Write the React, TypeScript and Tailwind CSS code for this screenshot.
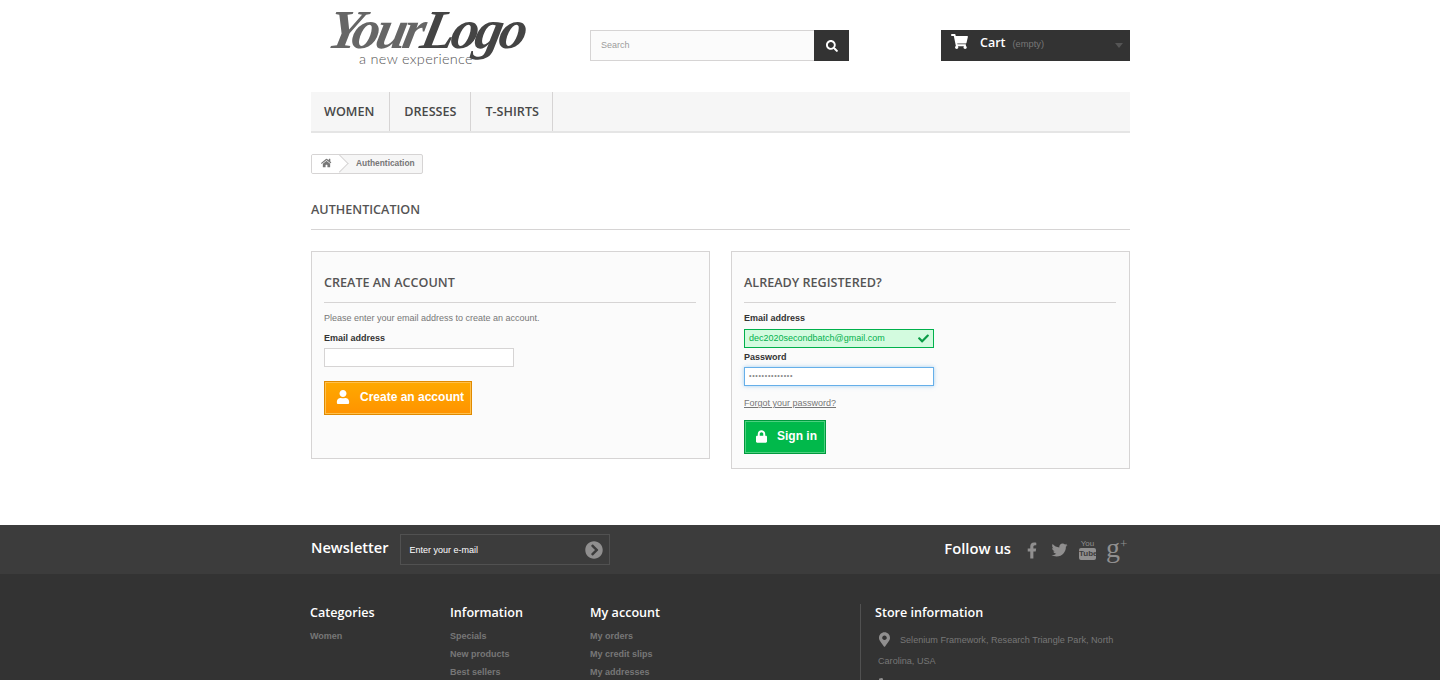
import { FaCheck, FaChevronCircleRight, FaFacebookF, FaHome, FaLock, FaMapMarkerAlt, FaPhone, FaSearch, FaShoppingCart, FaTwitter, FaUser } from "react-icons/fa";

const headingFont = "font-['Open_Sans',sans-serif]";

function Logo() {
  return (
    <div className="ml-[14px] mt-[10px] flex w-[210px] flex-col select-none">
      <span className="h-[40px] origin-bottom-left -skew-x-12 font-['Liberation_Serif',serif] text-[55px] leading-[40px] font-bold italic tracking-[-3.5px] whitespace-nowrap text-[#666]">
        Your<span className="text-[#444]">Logo</span>
      </span>
      <span className="pl-[34px] font-['Lato',sans-serif] text-[14.5px] leading-[18px] font-light tracking-[0.3px] whitespace-nowrap text-[#555]">
        a new experience
      </span>
    </div>
  );
}

function Header() {
  return (
    <div className="flex h-[92px] items-start">
      <div className="w-[279px]">
        <Logo />
      </div>
      <div className="mt-[30px] flex h-[31px] w-[259px]">
        <div className="flex-1 border border-r-0 border-[#d6d4d4] bg-[#fbfbfb] pl-[10px] text-[9px] leading-[29px] text-[#9c9b9b]">Search</div>
        <div className="flex w-[35px] items-center justify-center bg-[#333] text-white">
          <FaSearch className="h-[12px] w-[12px]" />
        </div>
      </div>
      <div className="ml-[92px] mt-[30px] flex h-[31px] w-[189px] items-start bg-[#333] pl-[10px] text-white">
        <FaShoppingCart className="mt-[4px] h-[15px] w-[17px]" />
        <span className={`ml-[12px] mt-[4px] text-[12.5px] leading-[18px] font-semibold ${headingFont}`}>Cart</span>
        <span className="ml-[7px] mt-[9px] text-[9.3px] leading-[11px] text-[#777]">(empty)</span>
        <span className="ml-auto mr-[7px] mt-[13px] h-0 w-0 border-x-[4px] border-t-[5px] border-x-transparent border-t-[#555]" />
      </div>
    </div>
  );
}

function Nav() {
  return (
    <div className={`flex h-[41px] border-b-2 border-[#e5e5e5] bg-[#f6f6f6] text-[12.6px] leading-[39px] font-semibold text-[#484848] ${headingFont}`}>
      <div className="border-r border-[#d6d4d4] pl-[13px] pr-[15px]">WOMEN</div>
      <div className="border-r border-[#d6d4d4] px-[14px]">DRESSES</div>
      <div className="border-r border-[#d6d4d4] pl-[14px] pr-[13px]">T-SHIRTS</div>
    </div>
  );
}

function Breadcrumb() {
  return (
    <div className="mt-[21px] flex h-[20px] w-[112px] items-center overflow-hidden rounded-[2px] border border-[#d6d4d4] bg-[#f6f6f6]">
      <div className="relative flex h-full w-[28px] items-center justify-center bg-white text-[#777]">
        <FaHome className="mb-[2px] ml-[1px] h-[10px] w-[11px]" />
        <span className="absolute right-[-6px] top-[2px] h-[13px] w-[13px] rotate-45 border-r border-t border-[#d6d4d4] bg-white" />
      </div>
      <span className="mb-[2px] ml-[16px] text-[8.4px] font-bold text-[#777]">Authentication</span>
    </div>
  );
}

function PanelTitle({ children }: { children: string }) {
  return (
    <div className={`border-b border-[#d6d4d4] pb-[9px] text-[12.6px] leading-[20px] font-semibold text-[#555454] ${headingFont}`}>
      {children}
    </div>
  );
}

function Label({ children }: { children: string }) {
  return <div className="text-[9px] leading-[11px] font-bold text-[#333]">{children}</div>;
}

function CreateAccount() {
  return (
    <div className="h-[208px] w-[399px] border border-[#d6d4d4] bg-[#fbfbfb] pl-[12px] pr-[13px] pt-[21px]">
      <PanelTitle>CREATE AN ACCOUNT</PanelTitle>
      <p className="mt-[10px] text-[9px] leading-[11px] text-[#777]">Please enter your email address to create an account.</p>
      <div className="mt-[9px]">
        <Label>Email address</Label>
      </div>
      <div className="mt-[4px] h-[19px] w-[190px] border border-[#d6d4d4] bg-white" />
      <div className="mt-[14px] flex h-[34px] w-[148px] items-center border border-[#e08a00] bg-gradient-to-b from-[#ffa900] to-[#ff9300] pb-[2px] pl-[11px] shadow-[inset_0_0_0_1px_#ffc04d]">
        <FaUser className="h-[14px] w-[14px] text-white" />
        <span className="ml-[10px] text-[12px] font-bold text-white">Create an account</span>
      </div>
    </div>
  );
}

function SignIn() {
  return (
    <div className="h-[218px] w-[399px] border border-[#d6d4d4] bg-[#fbfbfb] pl-[12px] pr-[13px] pt-[21px]">
      <PanelTitle>ALREADY REGISTERED?</PanelTitle>
      <div className="mt-[10px]">
        <Label>Email address</Label>
      </div>
      <div className="mt-[5px] flex h-[19px] w-[190px] items-center justify-between border border-[#01b14c] bg-[#d3fbdf] pl-[4px] pr-[3px] text-[9px] text-[#01b14c]">
        <span>dec2020secondbatch@gmail.com</span>
        <FaCheck className="h-[11px] w-[13px] text-[#0a9c46]" />
      </div>
      <div className="mt-[4px]">
        <Label>Password</Label>
      </div>
      <div className="mt-[4px] flex h-[19px] w-[190px] items-center border border-[#66afe9] bg-white pl-[4px] text-[7px] tracking-[0.7px] text-[#888] shadow-[0_0_4px_rgba(102,175,233,0.6)]">
        ••••••••••••••
      </div>
      <div className="mt-[12px] text-[9px] leading-[11px] text-[#777] underline">Forgot your password?</div>
      <div className="mt-[11px] flex h-[34px] w-[82px] items-center border border-[#009a3e] bg-[#01b94b] pb-[2px] pl-[11px] shadow-[inset_0_0_0_1px_#4dd07f]">
        <FaLock className="h-[13px] w-[11px] text-white" />
        <span className="ml-[10px] text-[12px] font-bold text-white">Sign in</span>
      </div>
    </div>
  );
}

function FooterColumn({ title, links }: { title: string; links: string[] }) {
  return (
    <div className="w-[140px]">
      <div className={`text-[12.6px] leading-[18px] font-semibold text-white ${headingFont}`}>{title}</div>
      <div className="mt-[5px] flex flex-col">
        {links.map((link) => (
          <span key={link} className="text-[9px] leading-[18px] font-bold text-[#777]">{link}</span>
        ))}
      </div>
    </div>
  );
}

function Footer() {
  return (
    <div className="mt-[56px] flex-1 bg-[#333]">
      <div className="h-[49px] bg-[#3c3c3c]">
        <div className="mx-auto flex h-full w-[820px] items-start pl-px">
          <span className={`mt-[11px] text-[14.6px] leading-[22px] font-semibold text-white ${headingFont}`}>Newsletter</span>
          <div className="ml-[11px] mt-[9px] flex h-[31px] w-[210px] items-center justify-between border border-[#515151] bg-[#3c3c3c] pl-[9px] pr-[6px] pt-[2px] text-[9px] text-white">
            <span>Enter your e-mail</span>
            <FaChevronCircleRight className="mb-[2px] h-[18px] w-[18px] text-[#908f8f]" />
          </div>
          <span className={`ml-auto mt-[12px] text-[14.8px] leading-[22px] font-semibold text-white ${headingFont}`}>Follow us</span>
          <div className="ml-[16px] mr-[4px] mt-[14px] flex items-start text-[#908f8f]">
            <FaFacebookF className="mt-[2px] h-[19px] w-[10px]" />
            <FaTwitter className="ml-[14px] mt-[3px] h-[16px] w-[17px]" />
            <div className="ml-[11px] flex w-[17px] flex-col items-center font-['Liberation_Sans_Narrow','Liberation_Sans',sans-serif] text-[8px] leading-[9px]">
              <span>You</span>
              <span className="w-full rounded-[2px] bg-[#908f8f] text-center leading-[12px] font-bold text-[#3c3c3c]">Tube</span>
            </div>
            <div className="ml-[10px] flex w-[20px] items-start font-['Liberation_Serif',serif] leading-none">
              <span className="text-[28px] leading-[17px]">g</span>
              <span className="text-[13px] leading-[10px]">+</span>
            </div>
          </div>
        </div>
      </div>
      <div className="mx-auto flex w-[820px] pt-[30px]">
        <FooterColumn title="Categories" links={["Women"]} />
        <FooterColumn title="Information" links={["Specials", "New products", "Best sellers"]} />
        <FooterColumn title="My account" links={["My orders", "My credit slips", "My addresses"]} />
        <div className="ml-[130px] flex-1 border-l border-[#515151] pl-[14px]">
          <div className={`text-[12.6px] leading-[18px] font-semibold text-white ${headingFont}`}>Store information</div>
          <div className="mt-[8px] flex items-start pl-[4px] text-[9.1px] leading-[21px] text-[#777]">
            <FaMapMarkerAlt className="mt-[2px] h-[15px] w-[11px] shrink-0 text-[#908f8f]" />
            <span className="ml-[10px] whitespace-nowrap">Selenium Framework, Research Triangle Park, North</span>
          </div>
          <div className="ml-[3px] text-[9.1px] leading-[21px] text-[#777]">Carolina, USA</div>
          <FaPhone className="ml-[4px] mt-[6px] h-[12px] w-[12px] -scale-x-100 text-[#908f8f]" />
        </div>
      </div>
    </div>
  );
}

export default function App() {
  return (
    <div className="flex h-[680px] flex-col overflow-hidden bg-white font-['Liberation_Sans',Arial,sans-serif]">
      <div className="mx-auto w-[820px] pl-px">
        <Header />
        <Nav />
        <Breadcrumb />
        <div className={`mt-[26px] border-b border-[#d6d4d4] pb-[9px] text-[12.6px] leading-[20px] font-semibold text-[#555454] ${headingFont}`}>
          AUTHENTICATION
        </div>
        <div className="mt-[21px] flex h-[218px] items-start justify-between">
          <CreateAccount />
          <SignIn />
        </div>
      </div>
      <Footer />
    </div>
  );
}
